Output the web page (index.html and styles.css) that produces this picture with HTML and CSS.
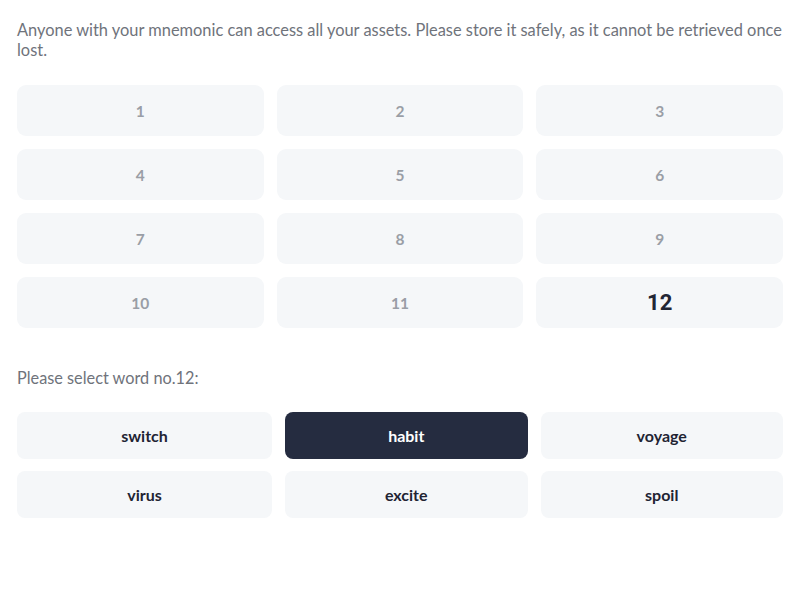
FILE: index.html
```html
<!DOCTYPE html>
<html lang="en">

<head>
  <meta charset="UTF-8">
  <meta name="viewport" content="width=device-width, initial-scale=1.0">
  <title>Verify mnemonic</title>
  <link rel="stylesheet" href="styles.css">
</head>

<body>
  <div class="page">
    <p class="tip">Anyone with your mnemonic can access all your assets. Please store it safely, as it cannot be retrieved once lost.</p>
    <ul class="slots">
      <li>1</li>
      <li>2</li>
      <li>3</li>
      <li>4</li>
      <li>5</li>
      <li>6</li>
      <li>7</li>
      <li>8</li>
      <li>9</li>
      <li>10</li>
      <li>11</li>
      <li class="current">12</li>
    </ul>
    <p class="ask">Please select word no.12:</p>
    <ul class="words">
      <li>switch</li>
      <li class="picked">habit</li>
      <li>voyage</li>
      <li>virus</li>
      <li>excite</li>
      <li>spoil</li>
    </ul>
  </div>
</body>

</html>
```

FILE: styles.css
```css
* {
  margin: 0;
  padding: 0;
  box-sizing: border-box;
}

body {
  background: #fff;
  font-family: Lato, "Open Sans", sans-serif;
}

.page {
  padding: 20px 17px 0 17px;
}

.tip {
  font-size: 16.4px;
  line-height: 20px;
  color: #6f737b;
}

.slots {
  list-style: none;
  display: grid;
  grid-template-columns: 1fr 1fr 1fr;
  gap: 13px;
  margin-top: 25px;
}

.slots li {
  height: 51px;
  display: flex;
  align-items: center;
  justify-content: center;
  background-color: #f5f7f9;
  border-radius: 9px;
  font-size: 15.5px;
  font-weight: 700;
  color: #9a9ea6;
}

.slots li.current {
  font-family: Roboto, sans-serif;
  font-size: 22px;
  color: #222634;
}

.ask {
  margin-top: 40px;
  font-size: 16.3px;
  line-height: 20px;
  color: #6f737b;
}

.words {
  list-style: none;
  display: grid;
  grid-template-columns: 255px 1fr 1fr;
  column-gap: 13px;
  row-gap: 12px;
  margin-top: 24px;
}

.words li {
  height: 47px;
  display: flex;
  align-items: center;
  justify-content: center;
  background-color: #f5f7f9;
  border-radius: 8px;
  font-size: 16px;
  font-weight: 700;
  color: #1f2433;
  cursor: pointer;
}

.words li.picked {
  background-color: #252c40;
  color: #fff;
}
```
